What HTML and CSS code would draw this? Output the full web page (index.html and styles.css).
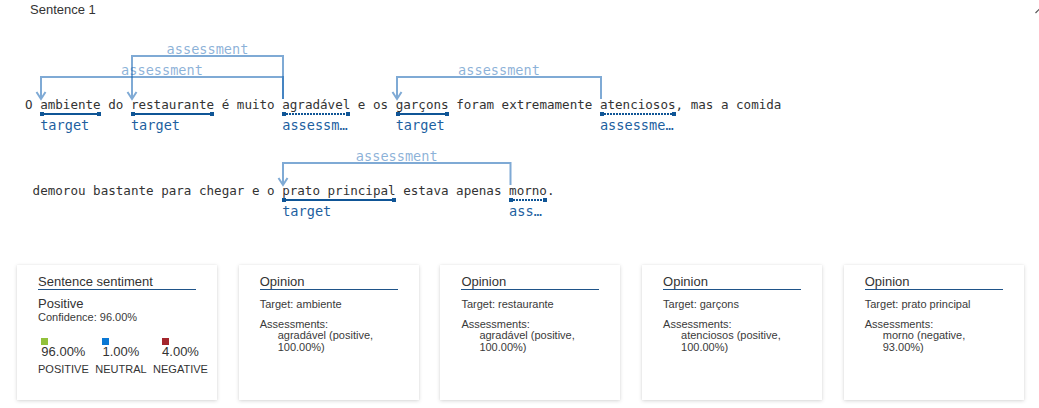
FILE: index.html
```html
<!DOCTYPE html>
<html lang="pt">
<head>
<meta charset="utf-8">
<title>Sentence 1</title>
<link rel="stylesheet" href="styles.css">
</head>
<body>
<div class="page">
  <svg class="arcs" width="1039" height="260" viewBox="0 0 1039 260" aria-hidden="true">
    <path class="arc" d="M283 99 V56 H132 V99 M127.5 92 L132 99 L136.5 92"/>
    <path class="arc" d="M283 99 V77 H41 V99 M36.5 92 L41 99 L45.5 92"/>
    <path class="arc" d="M601 99 V77 H397 V99 M392.5 92 L397 99 L401.5 92"/>
    <path class="arc" d="M510.5 185 V163 H283 V185 M278.5 178 L283 185 L287.5 178"/>
    <text class="arc-label" x="207.5" y="53.5">assessment</text>
    <text class="arc-label" x="162" y="74.5">assessment</text>
    <text class="arc-label" x="499" y="74.5">assessment</text>
    <text class="arc-label" x="396.75" y="160.5">assessment</text>
  </svg>

  <div class="header">
    <span class="header-title">Sentence 1</span>
    <svg class="toggle" width="8" height="6" viewBox="0 0 8 6" aria-hidden="true"><path d="M0.5 5 L4 1.5 L7.5 5"/></svg>
  </div>

  <div class="sentence">
    <div class="row">
      <span class="txt">O </span>
      <span class="tok"><span class="word">ambiente</span><span class="bar"><i></i><b></b><i></i></span><span class="lab">target</span></span>
      <span class="txt"> do </span>
      <span class="tok"><span class="word">restaurante</span><span class="bar"><i></i><b></b><i></i></span><span class="lab">target</span></span>
      <span class="txt"> é muito </span>
      <span class="tok assess"><span class="word">agradável</span><span class="bar"><i></i><b></b><i></i></span><span class="lab">assessment</span></span>
      <span class="txt"> e os </span>
      <span class="tok"><span class="word">garçons</span><span class="bar"><i></i><b></b><i></i></span><span class="lab">target</span></span>
      <span class="txt"> foram extremamente </span>
      <span class="tok assess"><span class="word">atenciosos</span><span class="bar"><i></i><b></b><i></i></span><span class="lab">assessment</span></span>
      <span class="txt">, mas a comida</span>
    </div>
    <div class="row row2">
      <span class="txt"> demorou bastante para chegar e o </span>
      <span class="tok"><span class="word">prato principal</span><span class="bar"><i></i><b></b><i></i></span><span class="lab">target</span></span>
      <span class="txt"> estava apenas </span>
      <span class="tok assess"><span class="word">morno</span><span class="bar"><i></i><b></b><i></i></span><span class="lab">assessment</span></span>
      <span class="txt">.</span>
    </div>
  </div>

  <div class="cards">
    <div class="card card-wide">
      <div class="card-title">Sentence sentiment</div>
      <div class="sent-label">Positive</div>
      <div class="small">Confidence: 96.00%</div>
      <div class="scores">
        <div class="score">
          <div class="val"><span class="sw sw-pos"></span><span class="num">96.00%</span></div>
          <div class="cat">POSITIVE</div>
        </div>
        <div class="score">
          <div class="val"><span class="sw sw-neu"></span><span class="num">1.00%</span></div>
          <div class="cat">NEUTRAL</div>
        </div>
        <div class="score">
          <div class="val"><span class="sw sw-neg"></span><span class="num">4.00%</span></div>
          <div class="cat">NEGATIVE</div>
        </div>
      </div>
    </div>

    <div class="card">
      <div class="card-title">Opinion</div>
      <div class="small op-target">Target: ambiente</div>
      <div class="small op-head">Assessments:</div>
      <div class="small op-list">agradável (positive, 100.00%)</div>
    </div>

    <div class="card">
      <div class="card-title">Opinion</div>
      <div class="small op-target">Target: restaurante</div>
      <div class="small op-head">Assessments:</div>
      <div class="small op-list">agradável (positive, 100.00%)</div>
    </div>

    <div class="card">
      <div class="card-title">Opinion</div>
      <div class="small op-target">Target: garçons</div>
      <div class="small op-head">Assessments:</div>
      <div class="small op-list">atenciosos (positive, 100.00%)</div>
    </div>

    <div class="card">
      <div class="card-title">Opinion</div>
      <div class="small op-target">Target: prato principal</div>
      <div class="small op-head">Assessments:</div>
      <div class="small op-list">morno (negative, 93.00%)</div>
    </div>
  </div>
</div>
</body>
</html>
```

FILE: styles.css
```css
html, body {
  margin: 0;
  padding: 0;
  background: #ffffff;
  overflow: hidden;
}

body {
  font-family: "Liberation Sans", Arial, sans-serif;
  color: #333333;
}

.page {
  position: relative;
  width: 1039px;
  height: 408px;
}

/* ---------- arcs overlay (diagram canvas) ---------- */
.arcs {
  position: absolute;
  left: 0;
  top: 0;
}

.arc {
  fill: none;
  stroke: rgba(21, 101, 178, 0.55);
  stroke-width: 2;
  stroke-linejoin: miter;
}

.arc-label {
  font-family: "DejaVu Sans Mono", monospace;
  font-size: 13.6px;
  fill: rgba(21, 101, 178, 0.5);
  text-anchor: middle;
}

/* ---------- header ---------- */
.header {
  display: flex;
  align-items: center;
  padding: 2px 0 0 30px;
  height: 16px;
}

.header-title {
  font-size: 13px;
  line-height: 16px;
  color: #333333;
}

.toggle {
  margin-left: auto;
  margin-right: -4px;
  margin-top: 2px;
}

.toggle path {
  fill: none;
  stroke: #555555;
  stroke-width: 1.2;
}

/* ---------- sentence ---------- */
.sentence {
  padding: 79px 0 0 25px;
  font-family: "DejaVu Sans Mono", monospace;
  font-size: 12.57px;
  line-height: 15px;
  color: #333333;
}

.row {
  display: flex;
  align-items: flex-start;
}

.row2 {
  margin-top: 50px;
}

.txt {
  white-space: pre;
}

.tok {
  display: flex;
  flex-direction: column;
}

.word {
  white-space: pre;
}

.bar {
  display: flex;
  align-items: center;
  height: 4px;
}

.bar i {
  width: 4px;
  height: 4px;
  background: #0f5596;
  flex: none;
}

.bar b {
  flex: 1;
  height: 2px;
  background: #0f5596;
}

.assess .bar b {
  background: repeating-linear-gradient(90deg, #0f5596 0 2px, transparent 2px 3px);
}

.lab {
  margin-top: 2px;
  width: 0;
  min-width: 100%;
  overflow: hidden;
  white-space: nowrap;
  text-overflow: ellipsis;
  font-size: 13.6px;
  line-height: 15px;
  color: #1d5f9f;
}

/* ---------- cards ---------- */
.cards {
  display: flex;
  gap: 21.7px;
  padding-left: 17px;
  margin-top: 46px;
}

.card {
  width: 180px;
  height: 135px;
  box-sizing: border-box;
  padding: 9px 21px 0 21px;
  background: #ffffff;
  box-shadow: 0 1px 4px rgba(0, 0, 0, 0.16), 0 0 1px rgba(0, 0, 0, 0.08);
}

.card-wide {
  width: 200px;
}

.card-title {
  font-size: 13px;
  line-height: 15px;
  color: #333333;
  border-bottom: 1px solid #1f5489;
}

.sent-label {
  margin-top: 7px;
  font-size: 13px;
  line-height: 14px;
  color: #333333;
}

.small {
  font-size: 11px;
  line-height: 13px;
  color: #3a3a3a;
}

.scores {
  display: flex;
  gap: 6.5px;
  margin-top: 14px;
}

.score {
  display: flex;
  flex-direction: column;
  align-items: center;
}

.val {
  display: flex;
  flex-direction: column;
  align-items: flex-start;
}

.sw {
  width: 7px;
  height: 7px;
}

.sw-pos { background: #92c13b; }
.sw-neu { background: #0a78d4; }
.sw-neg { background: #a4262c; }

.num {
  font-size: 13px;
  line-height: 14px;
  color: #333333;
}

.cat {
  margin-top: 4px;
  font-size: 11px;
  line-height: 13px;
  color: #333333;
}

.op-target {
  margin-top: 8px;
}

.op-head {
  margin-top: 7px;
  line-height: 12px;
}

.op-list {
  padding-left: 18px;
  line-height: 11.5px;
}
```
